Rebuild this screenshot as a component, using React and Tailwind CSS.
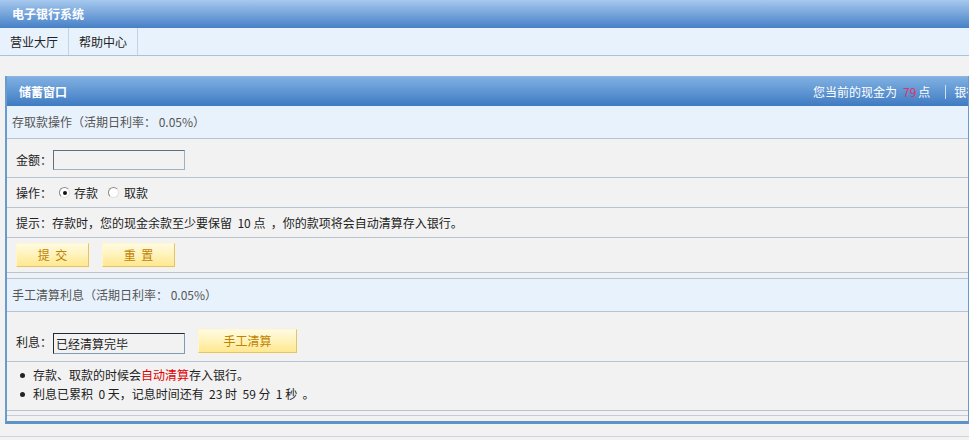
import React from "react";

function YellowButton({ children, className }) {
  return (
    <button
      type="button"
      className={
        "h-[24px] border border-t-[#fff6cc] border-l-[#fff6cc] border-r-[#e6c463] border-b-[#e6c463] bg-gradient-to-b from-[#fffbe0] to-[#ffe88f] text-[12px] text-[#c08300] " +
        className
      }
    >
      {children}
    </button>
  );
}

function Radio({ checked }) {
  return (
    <span className="inline-flex w-[11px] h-[11px] rounded-full border border-t-[#8a8a8a] border-l-[#8a8a8a] border-r-[#e0e0e0] border-b-[#e0e0e0] bg-white items-center justify-center">
      {checked && <span className="w-[4px] h-[4px] rounded-full bg-[#111]" />}
    </span>
  );
}

export default function App() {
  const rowCls = "border-b border-[#b9c4d1] flex items-center pl-[9px]";

  return (
    <div
      className="w-full min-h-[440px] bg-[#f2f2f2] text-[12px] text-[#222] overflow-hidden"
      style={{ fontFamily: '"Noto Sans CJK SC", "Noto Sans", sans-serif' }}
    >
      {/* top bar */}
      <div className="h-[28px] bg-gradient-to-b from-[#a6c9ee] to-[#4680c6] flex items-center pl-[12px] text-white font-bold">
        电子银行系统
      </div>

      {/* nav */}
      <div className="h-[28px] bg-[#e8f2fc] border-b border-[#a8c3dc] flex">
        <div className="px-[10px] flex items-center border-r border-[#c3d3e3]">营业大厅</div>
        <div className="px-[10px] flex items-center border-r border-[#c3d3e3]">帮助中心</div>
      </div>

      <div className="h-[20px]" />

      {/* panel */}
      <div className="ml-[5px] w-[964px] border-l-2 border-r border-b-[3px] border-[#6b9bcb] border-b-[#5f92c6]">
        <div className="h-[30px] border-t border-[#8fb6e0] bg-gradient-to-b from-[#7fb0e2] to-[#3f7bc2] flex items-center overflow-hidden whitespace-nowrap text-white">
          <div className="w-[806px] shrink-0 pl-[12px] font-bold">储蓄窗口</div>
          <div className="shrink-0 flex items-center">
            <span>您当前的现金为</span>
            <span className="ml-[6px] text-[#e0306a]">79</span>
            <span className="ml-[2px]">点</span>
            <span className="ml-[15px] w-px h-[14px] bg-[#cfe0f2]" />
            <span className="ml-[8px]">银行存款为</span>
          </div>
        </div>

        {/* section 1 */}
        <div className="h-[33px] bg-[#e8f2fc] border-b border-[#b9c4d1] flex items-center pl-[5px] text-[#555]">
          存取款操作（活期日利率：&nbsp;0.05%）
        </div>
        <div className={rowCls + " h-[39px] pt-[4px]"}>
          <span>金额：</span>
          <span className="ml-px w-[132px] h-[20px] border border-t-[#5d6f82] border-l-[#5d6f82] border-r-[#9fb0c2] border-b-[#9fb0c2] bg-[#f2f2f2]" />
        </div>
        <div className={rowCls + " h-[30px]"}>
          <span>操作：</span>
          <span className="ml-[7px] flex items-center">
            <Radio checked />
          </span>
          <span className="ml-[4px]">存款</span>
          <span className="ml-[10px] flex items-center">
            <Radio />
          </span>
          <span className="ml-[5px]">取款</span>
        </div>
        <div className={rowCls + " h-[30px]"}>
          提示：存款时，您的现金余款至少要保留&nbsp;&nbsp;10&nbsp;点&nbsp;&nbsp;，你的款项将会自动清算存入银行。
        </div>
        <div className={rowCls + " h-[35px]"}>
          <YellowButton className="w-[73px]">提&nbsp;&nbsp;交</YellowButton>
          <YellowButton className="ml-[13px] w-[73px]">重&nbsp;&nbsp;置</YellowButton>
        </div>
        <div className="h-[6px] border-b border-[#b9c4d1] bg-[#eef2f6]" />

        {/* section 2 */}
        <div className="h-[33px] bg-[#e8f2fc] border-b border-[#b9c4d1] flex items-center pl-[5px] text-[#555]">
          手工清算利息（活期日利率：&nbsp;0.05%）
        </div>
        <div className={rowCls + " h-[50px] items-end pb-[7px]"}>
          <span className="mb-[3px]">利息：</span>
          <span className="ml-px w-[132px] h-[21px] border border-t-[#1e2a36] border-l-[#1e2a36] border-r-[#7f9ab6] border-b-[#7f9ab6] bg-[#f2f2f2] flex items-center pl-[2px]">
            已经清算完毕
          </span>
          <YellowButton className="ml-[13px] w-[99px] h-[23px] mb-[1px]">手工清算</YellowButton>
        </div>
        <div className="h-[49px] border-b border-[#b9c4d1] pl-[13px] pt-[6px] flex flex-col gap-[5px]">
          <div className="flex items-center h-[14px]">
            <span className="w-[5px] h-[5px] rounded-full bg-[#222]" />
            <span className="ml-[8px]">
              存款、取款的时候会<span className="text-[#e00000]">自动清算</span>存入银行。
            </span>
          </div>
          <div className="flex items-center h-[14px]">
            <span className="w-[5px] h-[5px] rounded-full bg-[#222]" />
            <span className="ml-[8px]">
              利息已累积&nbsp;&nbsp;0&nbsp;天，记息时间还有&nbsp;&nbsp;23&nbsp;时&nbsp;&nbsp;59&nbsp;分&nbsp;&nbsp;1&nbsp;秒&nbsp;&nbsp;。
            </span>
          </div>
        </div>
        <div className="h-[5px] border-b border-[#c6cbdb]" />
        <div className="h-[5px]" />
      </div>

      <div className="h-[12px]" />
      <div className="border-t border-[#d0d4e0]" />
    </div>
  );
}
